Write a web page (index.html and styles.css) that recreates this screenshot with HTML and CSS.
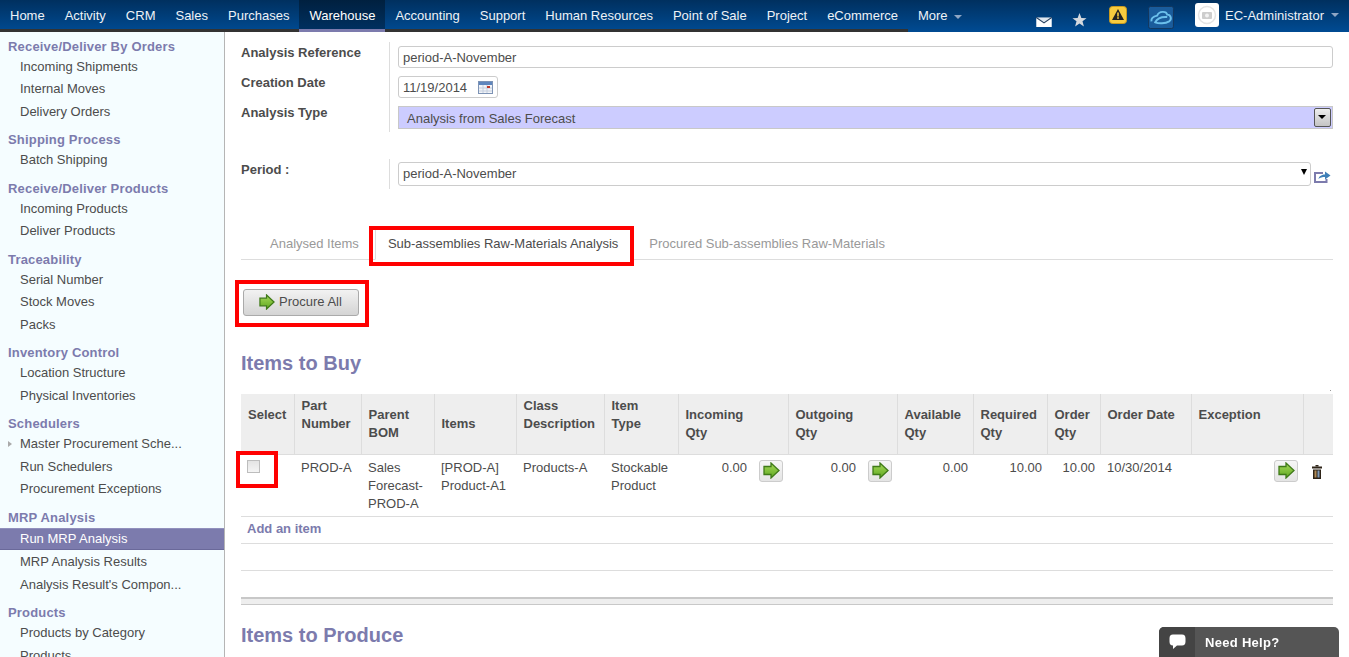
FILE: index.html
```html
<!DOCTYPE html>
<html lang="en">
<head>
  <meta charset="UTF-8">
  <meta name="viewport" content="width=device-width, initial-scale=1.0">
  <title>Run MRP Analysis</title>
  <link rel="stylesheet" href="styles.css">
</head>
<body>

  <!-- Top menu -->
  <header class="topbar">
    <nav class="menu">
      <a href="#">Home</a>
      <a href="#">Activity</a>
      <a href="#">CRM</a>
      <a href="#">Sales</a>
      <a href="#">Purchases</a>
      <a href="#" class="active">Warehouse</a>
      <a href="#">Accounting</a>
      <a href="#">Support</a>
      <a href="#">Human Resources</a>
      <a href="#">Point of Sale</a>
      <a href="#">Project</a>
      <a href="#">eCommerce</a>
      <a href="#">More <span class="caret"></span></a>
    </nav>
    <div class="tray">
      <svg class="tray-mail" width="16" height="10" viewBox="0 0 17 11">
        <rect width="17" height="10" y="1" fill="#fff"/>
        <path d="M0 0.5 L8.5 6.5 L17 0.5" fill="#dfe6ee" stroke="#27405f" stroke-width="1.2"/>
      </svg>
      <svg class="tray-star" width="15" height="16" viewBox="0 0 16 16">
        <path d="M8 0.5 L10 5.8 L15.5 6 L11.2 9.4 L12.7 15 L8 11.8 L3.3 15 L4.8 9.4 L0.5 6 L6 5.8 Z" fill="#d5d9de"/>
      </svg>
      <svg class="tray-warn" width="18" height="18" viewBox="0 0 18 18">
        <rect x="0.5" y="0.5" width="17" height="17" rx="3" fill="#f7cb3f" stroke="#c99a1e"/>
        <path d="M9 3 L15 14 H3 Z" fill="#222"/>
        <rect x="8.2" y="6.5" width="1.6" height="4" fill="#f7cb3f"/>
        <rect x="8.2" y="11.2" width="1.6" height="1.6" fill="#f7cb3f"/>
      </svg>
      <svg class="tray-cloud" width="26" height="23" viewBox="0 0 27 24">
        <rect x="0.5" y="0.5" width="26" height="23" rx="2" fill="#1a5c9c" stroke="#14365c"/>
        <path d="M3.5 16 C3 12 7 10.5 9.5 10 C11.5 5 19 5 20 9 C24 9 25 14 22 16 C18 18.5 11 18.5 7.5 17 C9.5 13 14 11 20 11.5" fill="none" stroke="#6cc0ec" stroke-width="2"/>
      </svg>
      <div class="user">
        <span class="avatar">
          <svg width="20" height="20" viewBox="0 0 20 20">
            <circle cx="10" cy="10" r="8.5" fill="none" stroke="#e4e4e4" stroke-width="1.5"/>
            <rect x="5" y="7" width="10" height="7" rx="1" fill="#cdcdcd"/>
            <circle cx="10" cy="10.5" r="2" fill="#f2f2f2"/>
          </svg>
        </span>
        EC-Administrator <span class="caret"></span>
      </div>
    </div>
  </header>

  <div class="layout">

    <!-- Left menu -->
    <aside class="sidebar">
      <h4>Receive/Deliver By Orders</h4>
      <ul>
        <li>Incoming Shipments</li>
        <li>Internal Moves</li>
        <li>Delivery Orders</li>
      </ul>
      <h4>Shipping Process</h4>
      <ul>
        <li>Batch Shipping</li>
      </ul>
      <h4>Receive/Deliver Products</h4>
      <ul>
        <li>Incoming Products</li>
        <li>Deliver Products</li>
      </ul>
      <h4>Traceability</h4>
      <ul>
        <li>Serial Number</li>
        <li>Stock Moves</li>
        <li>Packs</li>
      </ul>
      <h4>Inventory Control</h4>
      <ul>
        <li>Location Structure</li>
        <li>Physical Inventories</li>
      </ul>
      <h4>Schedulers</h4>
      <ul>
        <li class="has-children">Master Procurement Sche...</li>
        <li>Run Schedulers</li>
        <li>Procurement Exceptions</li>
      </ul>
      <h4>MRP Analysis</h4>
      <ul>
        <li class="selected">Run MRP Analysis</li>
        <li>MRP Analysis Results</li>
        <li>Analysis Result's Compon...</li>
      </ul>
      <h4>Products</h4>
      <ul>
        <li>Products by Category</li>
        <li>Products</li>
      </ul>
    </aside>

    <main class="content">

      <!-- Header form -->
      <div class="form-group">
        <label>Analysis Reference</label>
        <div class="field"><div class="input">period-A-November</div></div>
        <label>Creation Date</label>
        <div class="field">
          <span class="input date-input">11/19/2014
            <svg width="15" height="13" viewBox="0 0 15 13">
              <rect x="0.5" y="0.5" width="14" height="12" fill="#f2f4f8" stroke="#7d93b5"/>
              <rect x="1" y="1" width="13" height="3" fill="#5f86bd"/>
              <path d="M1 7 H14 M1 10 H14 M5 4 V12 M9 4 V12" stroke="#c4cede" stroke-width="1"/>
              <rect x="9" y="5" width="3" height="2" fill="#c0392b"/>
            </svg>
          </span>
        </div>
        <label>Analysis Type</label>
        <div class="field">
          <div class="type-select">
            Analysis from Sales Forecast
            <span class="type-arrow"></span>
          </div>
        </div>
      </div>

      <div class="form-group period-group">
        <label>Period :</label>
        <div class="field period-field">
          <div class="input period-select">period-A-November <span class="select-arrow"></span></div>
          <svg class="open-link" width="17" height="12" viewBox="0 0 17 12">
            <path d="M9 2 H1 V11 H12.5 V8" fill="none" stroke="#7c7bad" stroke-width="2"/>
            <path d="M4.5 8 C5 5 8 3.5 11 3.5 V0.5 L16.5 4.5 L11 8.5 V6 C8.5 6 6 6.5 4.5 8 Z" fill="#3f7fb8"/>
          </svg>
        </div>
      </div>

      <!-- Tabs -->
      <div class="tabs">
        <a href="#">Analysed Items</a>
        <a href="#" class="active">Sub-assemblies Raw-Materials Analysis<span class="mark mark-tab"></span></a>
        <a href="#">Procured Sub-assemblies Raw-Materials</a>
      </div>

      <div class="actions">
        <button class="btn" type="button">
          <svg width="16" height="16" viewBox="0 0 17 17"><use href="#go-arrow"/></svg>
          Procure All
        </button>
        <span class="mark mark-btn"></span>
      </div>

      <h2>Items to Buy</h2>

      <div class="grid-wrap">
        <span class="mark mark-check"></span>
        <span class="corner-dot"></span>
        <table class="grid">
          <colgroup>
            <col class="c-select"><col class="c-part"><col class="c-bom"><col class="c-items">
            <col class="c-class"><col class="c-type"><col class="c-qty"><col class="c-out">
            <col class="c-avail"><col class="c-req"><col class="c-order"><col class="c-date">
            <col class="c-exc"><col class="c-del">
          </colgroup>
          <thead>
            <tr>
              <th class="mid">Select</th>
              <th>Part Number</th>
              <th class="mid">Parent BOM</th>
              <th class="low">Items</th>
              <th>Class Description</th>
              <th>Item<br>Type</th>
              <th class="mid">Incoming<br>Qty</th>
              <th class="mid">Outgoing<br>Qty</th>
              <th class="mid">Available Qty</th>
              <th class="mid">Required Qty</th>
              <th class="mid">Order Qty</th>
              <th class="mid">Order Date</th>
              <th class="mid">Exception</th>
              <th></th>
            </tr>
          </thead>
          <tbody>
            <tr class="data-row">
              <td><input class="check" type="checkbox"></td>
              <td>PROD-A</td>
              <td>Sales Forecast-PROD-A</td>
              <td>[PROD-A] Product-A1</td>
              <td>Products-A</td>
              <td>Stockable Product</td>
              <td><div class="qty">0.00 <button class="go" type="button"><svg width="17" height="17" viewBox="0 0 17 17"><use href="#go-arrow"/></svg></button></div></td>
              <td><div class="qty">0.00 <button class="go" type="button"><svg width="17" height="17" viewBox="0 0 17 17"><use href="#go-arrow"/></svg></button></div></td>
              <td class="num">0.00</td>
              <td class="num">10.00</td>
              <td class="num">10.00</td>
              <td>10/30/2014</td>
              <td><div class="qty"><button class="go" type="button"><svg width="17" height="17" viewBox="0 0 17 17"><use href="#go-arrow"/></svg></button></div></td>
              <td>
                <svg class="trash" width="10" height="14" viewBox="0 0 10 14">
                  <rect x="3.5" y="0" width="3" height="1.5" fill="#2e2418"/>
                  <rect x="0" y="1.5" width="10" height="2" fill="#2e2418"/>
                  <path d="M1 4.5 H9 V14 H1 Z" fill="#2e2418"/>
                  <rect x="2.5" y="5.5" width="2" height="7" fill="#b08a55"/>
                  <rect x="5.5" y="5.5" width="2" height="7" fill="#7f99b8"/>
                </svg>
              </td>
            </tr>
            <tr class="add-row"><td colspan="14"><a href="#">Add an item</a></td></tr>
            <tr class="empty-row"><td colspan="14"></td></tr>
          </tbody>
        </table>
      </div>

      <div class="separator"></div>

      <h2 class="second">Items to Produce</h2>
    </main>
  </div>

  <!-- Help widget -->
  <div class="help">
    <span class="help-icon">
      <svg width="17" height="16" viewBox="0 0 17 16">
        <path d="M4 0.5 H13 C15.5 0.5 16.5 2 16.5 4.5 V7.5 C16.5 10 15.5 11.5 13 11.5 H8 L4 15 V11.5 C1.5 11.5 0.5 10 0.5 7.5 V4.5 C0.5 2 1.5 0.5 4 0.5 Z" fill="#fff"/>
      </svg>
    </span>
    <span class="help-text">Need Help?</span>
  </div>

  <!-- shared arrow icon -->
  <svg class="defs" width="0" height="0">
    <defs>
      <linearGradient id="go-fill" x1="0" y1="0" x2="0" y2="1">
        <stop offset="0" stop-color="#a6d95a"/>
        <stop offset="1" stop-color="#5fa820"/>
      </linearGradient>
      <symbol id="go-arrow" viewBox="0 0 17 17">
        <path d="M1 4.5 H8 V1 L16 8.5 L8 16 V12.5 H1 Z" fill="url(#go-fill)" stroke="#3f7a18" stroke-width="1.3"/>
      </symbol>
    </defs>
  </svg>

</body>
</html>
```

FILE: styles.css
```css
* {
  box-sizing: border-box;
}
html, body {
  height: 100%;
}
body {
  margin: 0;
  font-family: "Liberation Sans", Arial, sans-serif;
  font-size: 13px;
  color: #4c4c4c;
  background-color: #fff;
  display: flex;
  flex-direction: column;
  overflow: hidden;
}
a {
  text-decoration: none;
}

/* top menu */
.topbar {
  flex: none;
  height: 32px;
  display: flex;
  justify-content: space-between;
  background: linear-gradient(#00305f, #004b93);
}
.menu {
  display: flex;
}
.menu a {
  padding: 0 10px;
  line-height: 31px;
  height: 32px;
  color: #eef2f7;
  border-bottom: 3px solid #333;
  white-space: nowrap;
}
.menu a.active {
  background: linear-gradient(#00203f, #00305f);
  border-bottom-color: #7c7bad;
  color: #fff;
}
.menu a:last-child {
  border-bottom-color: transparent;
}
.caret {
  display: inline-block;
  margin-left: 3px;
  vertical-align: middle;
  border-left: 4px solid transparent;
  border-right: 4px solid transparent;
  border-top: 4px solid #8fa6c4;
}
.tray {
  display: flex;
  align-items: flex-start;
  padding-right: 10px;
  color: #eef2f7;
}
.tray-mail {
  margin-top: 17px;
}
.tray-star {
  margin: 12px 0 0 20px;
}
.tray-warn {
  margin: 6px 0 0 22px;
}
.tray-cloud {
  margin: 6px 0 0 21px;
}
.user {
  display: flex;
  align-items: center;
  height: 30px;
  margin-left: 21px;
}
.avatar {
  display: flex;
  align-items: center;
  justify-content: center;
  width: 24px;
  height: 24px;
  margin-right: 6px;
  background-color: #fff;
  border-radius: 3px;
}
.user .caret {
  margin-left: 7px;
}

/* left menu */
.layout {
  flex: 1;
  display: flex;
  min-height: 0;
}
.sidebar {
  flex: none;
  width: 225px;
  padding-top: 5.5px;
  background-color: #f5fdff;
  border-right: 1px solid #b5b5b5;
  overflow: hidden;
}
.sidebar h4 {
  margin: 0;
  padding-left: 8px;
  font-size: 13px;
  line-height: 18px;
  font-weight: bold;
  letter-spacing: 0.18px;
  color: #7c7bad;
}
.sidebar ul {
  list-style: none;
  margin: 0 0 8px;
  padding: 0;
}
.sidebar li {
  height: 22.5px;
  line-height: 22.5px;
  padding-left: 20px;
  white-space: nowrap;
}
.sidebar li.has-children {
  position: relative;
}
.sidebar li.has-children::before {
  content: "";
  position: absolute;
  left: 8px;
  top: 8px;
  border-top: 3px solid transparent;
  border-bottom: 3px solid transparent;
  border-left: 4px solid #aaa;
}
.sidebar li.selected {
  margin: 1px 0;
  background-color: #7c7bad;
  border-top: 1px solid #9190bd;
  border-bottom: 1px solid #6a699a;
  line-height: 20.5px;
  color: #fff;
}

/* form */
.content {
  flex: 1;
  min-width: 0;
  padding: 10px 16px 0;
  overflow: hidden;
}
.form-group {
  display: grid;
  grid-template-columns: 149px 1fr;
  grid-auto-rows: 30px;
}
.form-group label {
  padding-top: 2px;
  line-height: 18px;
  font-weight: bold;
  border-right: 1px solid #ddd;
}
.field {
  padding: 4px 0 0 8px;
}
.input {
  display: block;
  width: 100%;
  height: 22px;
  padding: 1px 4px 0;
  font: inherit;
  color: #4c4c4c;
  line-height: 20px;
  background-color: #fff;
  border: 1px solid #ccc;
  border-radius: 3px;
}
.date-input {
  display: flex;
  align-items: center;
  justify-content: space-between;
  width: 100px;
  padding-right: 4px;
}
.type-select {
  display: flex;
  align-items: center;
  justify-content: space-between;
  height: 23px;
  padding: 1px 1px 0 8px;
  background-color: #ccccff;
  border: 1px solid #c8c8c8;
}
.type-arrow {
  position: relative;
  width: 17px;
  height: 19px;
  margin-top: -1px;
  background: linear-gradient(#eee, #c4c4c4);
  border: 1px solid #555;
  border-radius: 2px;
}
.type-arrow::after {
  content: "";
  position: absolute;
  left: 3px;
  top: 6px;
  border-left: 4px solid transparent;
  border-right: 4px solid transparent;
  border-top: 4px solid #000;
}
.period-group {
  margin-top: 27px;
}
.period-field {
  display: flex;
  align-items: flex-start;
  padding-top: 3px;
}
.period-select {
  flex: 1;
  height: 24px;
  position: relative;
}
.select-arrow {
  position: absolute;
  right: 3px;
  top: 6px;
  border-left: 3px solid transparent;
  border-right: 3px solid transparent;
  border-top: 6px solid #000;
}
.open-link {
  flex: none;
  margin: 9px 2px 0 3px;
}

/* tabs */
.tabs {
  display: flex;
  height: 34px;
  margin-top: 37px;
  padding-left: 16px;
  border-bottom: 1px solid #ddd;
}
.tabs a {
  position: relative;
  height: 34px;
  margin-right: 3px;
  padding: 0 13px;
  line-height: 35px;
  color: #999;
  white-space: nowrap;
}
.tabs a.active {
  color: #4c4c4c;
  background-color: #fff;
  border: 1px solid #ddd;
  border-bottom-color: #fff;
  padding: 0 14px 0 12px;
  line-height: 33px;
}

/* red marks drawn over the screenshot */
.mark {
  position: absolute;
  border: 4px solid #f00;
  pointer-events: none;
}
.mark-tab {
  left: -7px;
  top: -1px;
  width: 265px;
  height: 40px;
}
.mark-btn {
  left: -6px;
  top: 20px;
  width: 134px;
  height: 47px;
}
.mark-check {
  left: -5px;
  top: 57px;
  width: 42px;
  height: 37px;
}

.actions {
  position: relative;
  height: 70px;
  padding-top: 29px;
}
.btn {
  display: flex;
  align-items: center;
  width: 116px;
  height: 27px;
  margin-left: 2px;
  padding: 0 0 2px 15px;
  gap: 4px;
  font: inherit;
  color: #4c4c4c;
  background: linear-gradient(#f2f2f2, #d4d4d4);
  border: 1px solid #aaa;
  border-radius: 3px;
}
h2 {
  margin: 16px 0 14px;
  height: 34px;
  font-size: 20px;
  line-height: 34px;
  font-weight: bold;
  color: #7c7bad;
}
.second {
  margin-top: 13px;
}

/* table */
.grid-wrap {
  position: relative;
}
.corner-dot {
  position: absolute;
  right: 2px;
  top: -4px;
  width: 1px;
  height: 1px;
  background-color: #999;
}
.grid {
  width: 100%;
  table-layout: fixed;
  border-collapse: collapse;
}
.c-select { width: 53px; }
.c-part { width: 67px; }
.c-bom { width: 73px; }
.c-items { width: 82px; }
.c-class { width: 88px; }
.c-type { width: 74px; }
.c-qty { width: 110px; }
.c-out { width: 109px; }
.c-avail { width: 76px; }
.c-req { width: 74px; }
.c-order { width: 53px; }
.c-date { width: 91px; }
.c-exc { width: 112px; }
.c-del { width: 30px; }

.grid th {
  height: 60px;
  padding: 3px 5px 0 7px;
  line-height: 18px;
  text-align: left;
  vertical-align: top;
  background-color: #eee;
  border-left: 1px solid #ddd;
  border-bottom: 1px solid #ddd;
}
.grid th:first-child {
  border-left: none;
}
.grid th.mid {
  padding-top: 12px;
}
.grid th.low {
  padding-top: 21px;
}
.data-row td {
  height: 62px;
  padding: 4px 5px 0 7px;
  line-height: 18px;
  vertical-align: top;
  border-bottom: 1px solid #ddd;
}
.grid .num {
  text-align: right;
  padding-right: 5px;
}
.qty {
  display: flex;
  justify-content: flex-end;
  gap: 12px;
}
.go {
  display: flex;
  align-items: center;
  justify-content: center;
  width: 24px;
  height: 22px;
  margin-top: 1px;
  padding: 0;
  background: linear-gradient(#f6f6f6, #e4e4e4);
  border: 1px solid #ccc;
  border-radius: 3px;
}
.check {
  display: block;
  appearance: none;
  width: 13px;
  height: 13px;
  margin: 1px 0 0 -1px;
  background: linear-gradient(#e4e4e4, #f4f4f4);
  border: 1px solid #bdbdbd;
}
.trash {
  display: block;
  margin: 6px 0 0 2px;
}
.add-row td {
  height: 27px;
  padding: 0 6px 2px;
  border-bottom: 1px solid #ddd;
}
.add-row a {
  font-weight: bold;
  color: #7c7bad;
}
.empty-row td {
  height: 27px;
  border-bottom: 1px solid #ddd;
}
.separator {
  height: 8px;
  margin-top: 26px;
  background-color: #eee;
  border-top: 2px solid #c8c8c8;
  border-bottom: 1px solid #c8c8c8;
}

/* help widget */
.help {
  position: fixed;
  right: 10px;
  bottom: 0;
  display: flex;
  width: 180px;
  height: 30px;
  color: #fff;
  font-weight: bold;
  background-color: #555;
  border-radius: 5px 5px 0 0;
  overflow: hidden;
}
.help-icon {
  display: flex;
  align-items: center;
  justify-content: center;
  width: 36px;
  background-color: #444;
}
.help-text {
  padding-left: 10px;
  line-height: 31px;
  letter-spacing: 0.3px;
}
.defs {
  position: absolute;
}
```
